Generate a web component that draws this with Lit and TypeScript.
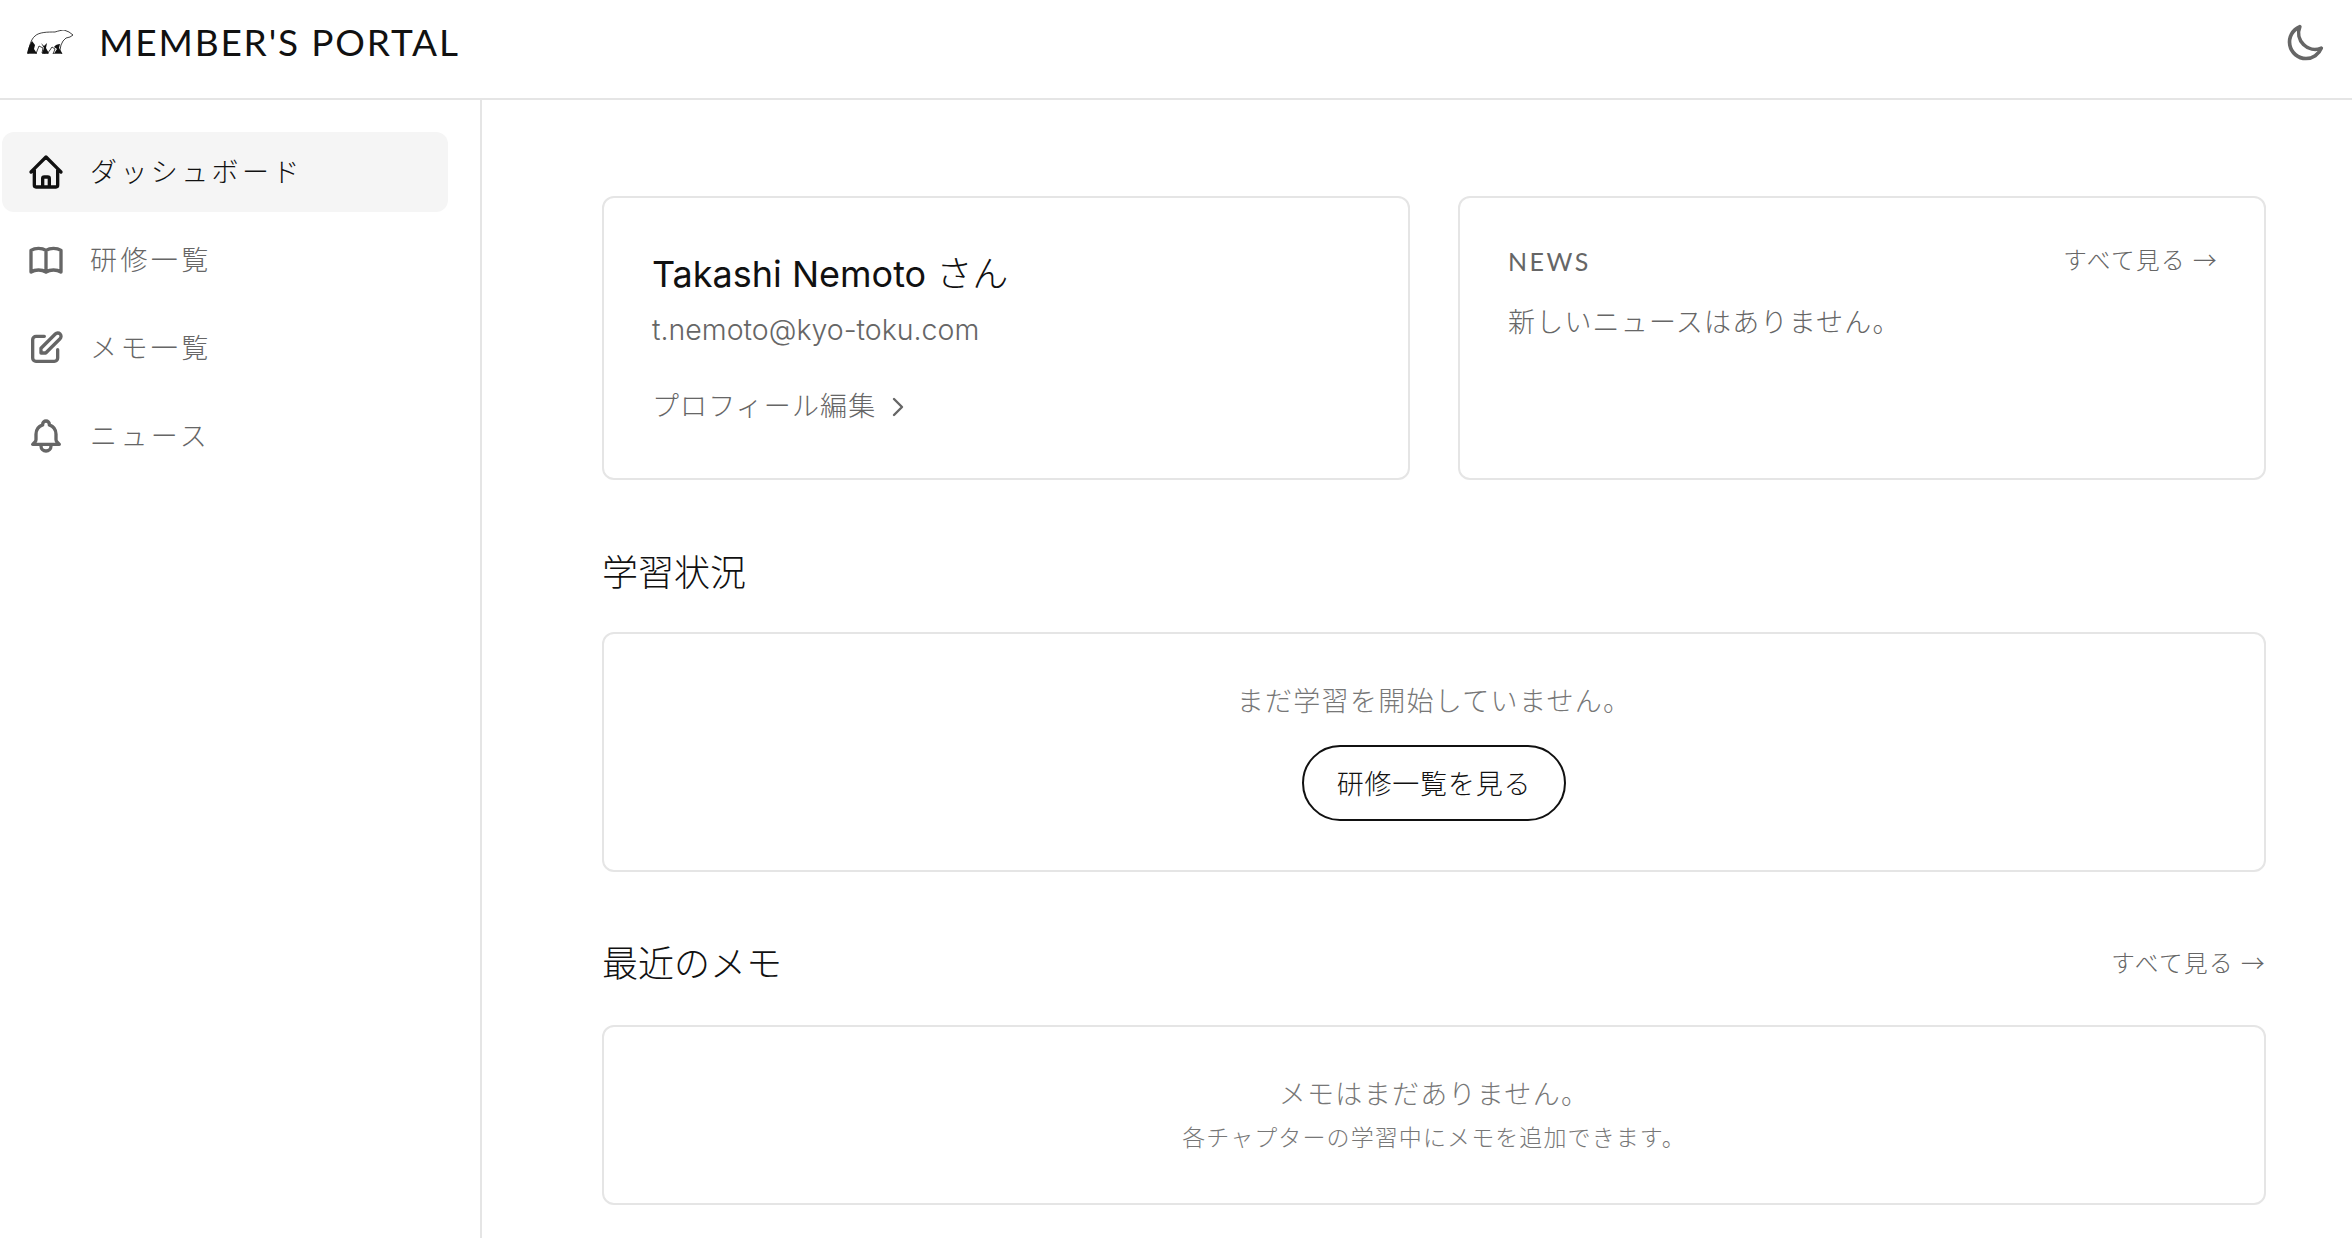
import { LitElement, html, css, svg } from "lit";
import { customElement } from "lit/decorators.js";

const ic = (d: string) => html`<svg class="ic" viewBox="0 0 24 24" fill="none" stroke="currentColor" stroke-width="2" stroke-linecap="round" stroke-linejoin="round">${svg`<path d=${d}></path>`}</svg>`;
const HOME = "M3 12l2-2m0 0l7-7 7 7M5 10v10a1 1 0 001 1h3m10-11l2 2m-2-2v10a1 1 0 01-1 1h-3m-6 0a1 1 0 001-1v-4a1 1 0 011-1h2a1 1 0 011 1v4a1 1 0 001 1m-6 0h6";
const BOOK = "M12 6.253v13m0-13C10.832 5.477 9.246 5 7.5 5S4.168 5.477 3 6.253v13C4.168 18.477 5.754 18 7.5 18s3.332.477 4.5 1.253m0-13C13.168 5.477 14.754 5 16.5 5c1.747 0 3.332.477 4.5 1.253v13C19.832 18.477 18.247 18 16.5 18c-1.746 0-3.332.477-4.5 1.253";
const PEN = "M11 5H6a2 2 0 00-2 2v11a2 2 0 002 2h11a2 2 0 002-2v-5m-1.414-9.414a2 2 0 112.828 2.828L11.828 15H9v-2.828l8.586-8.586z";
const BELL = "M15 17h5l-1.405-1.405A2.032 2.032 0 0118 14.158V11a6.002 6.002 0 00-4-5.659V5a2 2 0 10-4 0v.341C7.67 6.165 6 8.388 6 11v3.159c0 .538-.214 1.055-.595 1.436L4 17h5m6 0v1a3 3 0 11-6 0v-1m6 0H9";
const MOON = "M20.354 15.354A9 9 0 018.646 3.646 9.003 9.003 0 0012 21a9.003 9.003 0 008.354-5.646z";

const nav = [
  { label: "ダッシュボード", icon: HOME, active: true },
  { label: "研修一覧", icon: BOOK },
  { label: "メモ一覧", icon: PEN },
  { label: "ニュース", icon: BELL },
];

@customElement("app-root")
export class AppRoot extends LitElement {
  static styles = css`
    :host { display: flex; flex-direction: column; height: 1238px; overflow: hidden; background: #fff; color: #111;
      font-family: Inter, "Noto Sans CJK JP", sans-serif; font-weight: 400; }
    * { box-sizing: border-box; }
    .top { height: 100px; flex: none; border-bottom: 2px solid #e5e5e5; display: flex; align-items: center; padding: 0 24px 15px 27px; }
    .bear { width: 46px; height: 24px; flex: none; }
    .brand { margin-left: 26px; font-family: Lato, sans-serif; font-size: 37px; letter-spacing: 1.85px; color: #111; line-height: 1; }
    .theme { margin-left: auto; color: #666; }
    .theme .ic { width: 44px; height: 44px; }
    .ic { width: 40px; height: 40px; display: block; flex: none; }
    .body { flex: 1; display: flex; min-height: 0; }
    .side { width: 482px; flex: none; border-right: 2px solid #e5e5e5; padding: 32px 32px 0 2px; display: flex; flex-direction: column; gap: 8px; }
    .item { height: 80px; border-radius: 12px; display: flex; align-items: center; gap: 24px; padding-left: 24px; color: #666; font-size: 27px; letter-spacing: 3.4px; font-weight: 300; }
    .item span { margin-top: -3px; }
    .item.on { background: #f5f5f5; color: #111; }
    .main { flex: 1; padding: 96px 86px 0 120px; display: flex; flex-direction: column; min-width: 0; }
    .cards { display: grid; grid-template-columns: 1fr 1fr; gap: 48px; height: 284px; }
    .card { border: 2px solid #e5e5e5; border-radius: 12px; background: #fff; }
    .profile { padding: 51px 48px 0; }
    .name { font-size: 36px; line-height: 50px; color: #111; }
    .name span { font-weight: 300; }
    .mail { font-size: 28.5px; line-height: 40px; color: #666; font-weight: 300; margin-top: 11px; }
    .edit { margin-top: 39px; display: flex; align-items: center; color: #666; font-size: 27px; letter-spacing: 1.1px; line-height: 36px; font-weight: 300; }
    .edit svg { width: 24px; height: 24px; margin-left: 10px; }
    .news { padding: 46px 46px 0 48px; }
    .nh { display: flex; justify-content: space-between; align-items: center; height: 34px; }
    .nt { font-family: Lato, sans-serif; font-size: 25px; letter-spacing: 2.5px; color: #666; }
    .all { font-family: "Noto Sans CJK JP", sans-serif; font-size: 23.6px; letter-spacing: 1.5px; color: #666; font-weight: 300; display: inline-flex; align-items: center; }
    .nh .all { margin-top: -4px; }
    .nb { margin-top: 26px; font-size: 27px; letter-spacing: 1.2px; color: #666; font-weight: 300; line-height: 38px; }
    h2 { margin: 0; font-size: 36px; font-weight: 300; line-height: 50px; color: #111; }
    .sec { height: 84px; margin-top: 68px; display: flex; justify-content: space-between; align-items: flex-start; }
    .sec.two { height: 86px; margin-top: 67px; }
    .sec .all { line-height: 50px; margin-top: -2px; }
    .empty { display: flex; flex-direction: column; align-items: center; }
    .e1 { height: 240px; padding-top: 49px; }
    .e2 { height: 180px; padding-top: 49px; }
    .msg { font-size: 27px; letter-spacing: 1.3px; color: #777; font-weight: 300; line-height: 38px; }
    .sub { font-size: 23px; letter-spacing: 1.1px; color: #777; font-weight: 300; line-height: 34px; margin-top: 7px; }
    .btn { margin-top: 24px; width: 264px; height: 76px; border: 2px solid #111; border-radius: 38px; display: flex; align-items: center; justify-content: center; padding-bottom: 2px; font-size: 27px; letter-spacing: .8px; color: #111; font-weight: 300; }
  `;

  render() {
    return html`
      <header class="top">
        <svg class="bear" viewBox="0 0 46 24">
          <path d="M1 24 C2 17 4 9 8 6 C12 2 21 2 28 2 C31 1 35 0 37 0 L42 2 L46 5 L43 7 L39 8 L36 11 L34 15 L33 20 L35 24 L26 24 L28 19 L25 17 L23 20 L20 24 L15 23 L16 18 L12 16 L10 21 L9 24 Z" fill="#fff" stroke="#111" stroke-width=".8"/>
          <path d="M0 23.5 C1 18 3 14 5 11 L8 15 L7 19 L10 23.5 Z M14 13 L17 16 L20 13 L19 18 L22 23.5 L15 23.5 L17 18 Z M27 17 C28 15 31 14 33 14 L32 18 L35 23.5 L27 23.5 L30 19 Z" fill="#111"/>
        </svg>
        <span class="brand">MEMBER'S PORTAL</span>
        <span class="theme">${ic(MOON)}</span>
      </header>
      <div class="body">
        <aside class="side">
          ${nav.map((n) => html`<div class="item ${n.active ? "on" : ""}">${ic(n.icon)}<span>${n.label}</span></div>`)}
        </aside>
        <main class="main">
          <div class="cards">
            <section class="card profile">
              <div class="name">Takashi Nemoto <span>さん</span></div>
              <div class="mail">t.nemoto@kyo-toku.com</div>
              <div class="edit">プロフィール編集<svg viewBox="0 0 24 24" fill="none" stroke="currentColor" stroke-width="2.4" stroke-linecap="round" stroke-linejoin="round"><path d="M8 4l8 8-8 8"></path></svg></div>
            </section>
            <section class="card news">
              <div class="nh"><span class="nt">NEWS</span><span class="all">すべて見る →</span></div>
              <div class="nb">新しいニュースはありません。</div>
            </section>
          </div>
          <div class="sec"><h2>学習状況</h2></div>
          <section class="card empty e1">
            <div class="msg">まだ学習を開始していません。</div>
            <div class="btn">研修一覧を見る</div>
          </section>
          <div class="sec two"><h2>最近のメモ</h2><span class="all">すべて見る →</span></div>
          <section class="card empty e2">
            <div class="msg">メモはまだありません。</div>
            <div class="sub">各チャプターの学習中にメモを追加できます。</div>
          </section>
        </main>
      </div>
    `;
  }
}
